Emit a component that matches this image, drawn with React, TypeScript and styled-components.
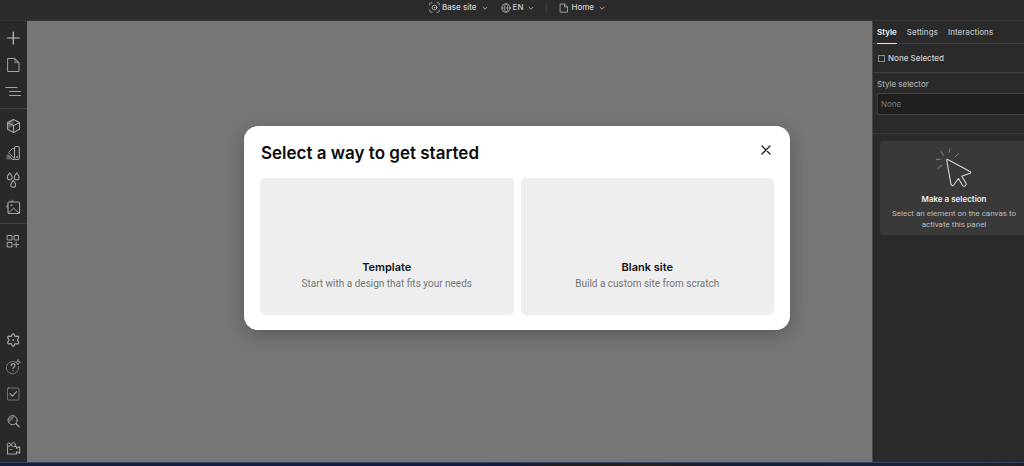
import React from "react";
import styled, { createGlobalStyle } from "styled-components";

const GlobalStyle = createGlobalStyle`
  *, *::before, *::after { box-sizing: border-box; }
  body {
    margin: 0;
    background: #2a2a2a;
    font-family: Inter, "Liberation Sans", sans-serif;
    -webkit-font-smoothing: antialiased;
  }
  button, input { font: inherit; color: inherit; }
  h1, h2, p { margin: 0; }
`;

const Viewport = styled.div`
  overflow: hidden;
`;

const Shell = styled.div`
  position: relative;
  display: grid;
  grid-template: 21px 1fr 4px / 27px 1fr 162px;
  grid-template-areas: "top top top" "rail canvas panel" "dock dock dock";
  width: calc(100% + 10px);
  min-height: 100vh;
`;

const TopBar = styled.header`
  grid-area: top;
  display: flex;
  align-items: flex-start;
  justify-content: center;
  background: #2b2b2b;
  border-bottom: 1px solid #363636;
`;

const TopMenu = styled.button`
  display: flex;
  align-items: center;
  height: 15px;
  padding: 0;
  border: 0;
  background: none;
  font-size: 8px;
  font-weight: 500;
  line-height: 15px;
  color: #cfcfcf;
  white-space: nowrap;

  svg { color: #a6a6a6; }
  svg:first-child { margin-right: 2px; }
  svg:last-child { margin-left: 5px; }
  & + & { margin-left: 13px; }
`;

const TopDivider = styled.span`
  width: 1px;
  height: 10px;
  margin: 3px 12px 0;
  background: #3c3c3c;
`;

const Rail = styled.nav`
  grid-area: rail;
  display: flex;
  flex-direction: column;
  padding: 3px 0 1px;
  background: #292929;
`;

const RailGroup = styled.div`
  display: flex;
  flex-direction: column;

  & + & {
    margin-top: 3px;
    padding-top: 3px;
    border-top: 1px solid #404040;
  }
`;

const RailFooter = styled.div`
  display: flex;
  flex-direction: column;
  margin-top: auto;
`;

const RailButton = styled.button`
  display: grid;
  place-items: center;
  height: 27px;
  padding: 0 1px 0 0;
  border: 0;
  background: none;
  color: #a4a4a4;
`;

const Canvas = styled.main`
  grid-area: canvas;
  background: #767676;
`;

const Panel = styled.aside`
  grid-area: panel;
  background: #2a2a2a;
  border-left: 1px solid #484848;
  font-size: 8px;
  color: #bdbdbd;
`;

const Tabs = styled.div`
  display: flex;
  gap: 10px;
  height: 23px;
  padding-left: 4px;
  border-bottom: 1px solid #424242;
`;

const Tab = styled.button<{ $active?: boolean }>`
  height: 23px;
  padding: 0;
  border: 0;
  border-bottom: 1px solid ${(p) => (p.$active ? "#e8e8e8" : "transparent")};
  background: none;
  font-weight: ${(p) => (p.$active ? 600 : 500)};
  color: ${(p) => (p.$active ? "#f0f0f0" : "#bdbdbd")};
`;

const SelectedRow = styled.div`
  display: flex;
  align-items: center;
  gap: 3px;
  height: 29px;
  padding-left: 5px;
  border-bottom: 1px solid #424242;
  font-weight: 500;
  color: #cfcfcf;
`;

const Square = styled.span`
  width: 7px;
  height: 7px;
  border: 1px solid #8c8c8c;
`;

const SelectorSection = styled.div`
  display: flex;
  flex-direction: column;
  gap: 2px;
  height: 61px;
  padding: 4px 4px 0;
  border-bottom: 1px solid #383838;

  label { line-height: 14px; }
`;

const SelectorInput = styled.input`
  width: 100%;
  height: 22px;
  padding: 0 3px;
  border: 1px solid #404040;
  border-radius: 2px;
  outline: 0;
  background: #1f1f1f;

  &::placeholder { color: #7d7d7d; opacity: 1; }
`;

const EmptyCard = styled.section`
  display: flex;
  flex-direction: column;
  align-items: center;
  margin: 7px 6px 0 7px;
  padding: 6px 8px 5px;
  border-radius: 3px;
  background: #393939;
  text-align: center;

  h2 {
    margin: 5px 0 3px;
    font-size: 8px;
    font-weight: 600;
    line-height: 11px;
    color: #ededed;
  }

  p {
    font-family: Roboto, "Liberation Sans", sans-serif;
    line-height: 11px;
  }
`;

const Dock = styled.footer`
  grid-area: dock;
  border-top: 1px solid #33435c;
  background: linear-gradient(90deg, #14203c 0%, #151b3d 50%, #201e22 54%, #251f20 63%, #14203a 72%, #16233a 88%, #211f24 100%);
`;

const Overlay = styled.div`
  position: absolute;
  inset: 0;
  display: grid;
  place-items: center;
  padding-bottom: 10px;
`;

const Dialog = styled.section`
  width: 90%;
  max-width: 546px;
  padding: 0 16px 15px;
  border-radius: 14px;
  background: #fff;
  box-shadow: 0 5px 18px rgba(0, 0, 0, 0.24);
`;

const DialogHeader = styled.div`
  display: flex;
  align-items: center;
  justify-content: space-between;
  height: 52px;
  padding: 1px 1px 0;

  h1 {
    font-size: 17px;
    font-weight: 600;
    line-height: 24px;
    color: #0b0b0b;
  }
`;

const CloseButton = styled.button`
  display: grid;
  place-items: center;
  width: 14px;
  height: 14px;
  margin-bottom: 6px;
  padding: 0;
  border: 0;
  background: none;
  color: #222;
`;

const Options = styled.div`
  display: grid;
  grid-template-columns: 1fr 1fr;
  gap: 7px;
`;

const OptionCard = styled.button`
  display: flex;
  flex-direction: column;
  align-items: center;
  justify-content: flex-end;
  height: 137px;
  padding: 0 8px 24px;
  border: 0;
  border-radius: 5px;
  background: #eee;
`;

const OptionTitle = styled.span`
  font-size: 11px;
  font-weight: 600;
  line-height: 17px;
  color: #111;
`;

const OptionText = styled.span`
  font-family: Roboto, "Liberation Sans", sans-serif;
  font-size: 10px;
  line-height: 15px;
  color: #757575;
`;

type IconProps = { size?: number; children: React.ReactNode };

function Icon({ size = 16, children }: IconProps) {
  return (
    <svg
      width={size}
      height={size}
      viewBox={`0 0 ${size} ${size}`}
      fill="none"
      stroke="currentColor"
      strokeWidth="1"
      strokeLinecap="round"
      strokeLinejoin="round"
      aria-hidden="true"
    >
      {children}
    </svg>
  );
}

const Chevron = () => (
  <Icon size={6}>
    <path d="M1 2.2 3 4.2 5 2.2" />
  </Icon>
);

const railGroups: { label: string; art: React.ReactNode }[][] = [
  [
    { label: "Add elements", art: <path d="M8.300 2v12M2.300 8h12" stroke="#c4c4c4" strokeWidth="1.2" /> },
    {
      label: "Pages",
      art: (
        <>
          <path d="M3 1.500h6.700L14 5.800v8.700H3z" />
          <path d="M9.700 1.500v4.300H14z" fill="currentColor" fillOpacity=".4" strokeOpacity=".5" />
        </>
      ),
    },
    { label: "Navigator", art: <path d="M.8 3.500H12M4.500 7.500h11M4.500 11.500h11" strokeWidth="1.1" /> },
  ],
  [
    {
      label: "Components",
      art: (
        <>
          <path d="M8.500 1.500 14.500 4.600v6.700L8.500 14.500 2.500 11.300V4.600zM2.500 4.600l6 3.200 6-3.200M8.500 7.800v6.700" strokeWidth="1.100" />
          <path d="M2.500 4.600 8.500 1.500v6.300zM2.500 4.600l6 3.200-6 3.500z" fill="currentColor" fillOpacity=".4" stroke="none" />
        </>
      ),
    },
    {
      label: "Variables",
      art: (
        <>
          <rect x="9.500" y="1.500" width="4.800" height="13" rx="1.500" strokeWidth="1.100" />
          <path d="M9.500 3.800 7.500 3.500 3.500 7.300 8.500 12.500M9.500 14.500H7.500L3.500 10" />
          <path d="M1.500 10v4.500h6L3 9.500z" fill="currentColor" fillOpacity=".5" stroke="none" />
          <circle cx="11.900" cy="12" r=".5" />
        </>
      ),
    },
    {
      label: "Styles",
      art: (
        <>
          <path d="M4.700.8C3.700 2.600 2.300 3.800 2.300 5.400a2.400 2.400 0 0 0 4.800 0C7.100 3.800 5.700 2.600 4.700.8z" strokeWidth="1.100" />
          <path d="M11.700.8c-1 1.800-2.400 3-2.400 4.600a2.400 2.400 0 0 0 4.800 0c0-1.600-1.400-2.800-2.400-4.600z" strokeWidth="1.100" />
          <path d="M8.200 8.300c-1 1.800-2.400 3-2.400 4.600a2.400 2.400 0 0 0 4.800 0c0-1.600-1.400-2.800-2.400-4.600z" strokeWidth="1.100" />
        </>
      ),
    },
    {
      label: "Assets",
      art: (
        <>
          <rect x="3" y="3" width="11.500" height="11.500" rx="1" strokeWidth="1.100" />
          <path d="m3.500 14 5-4.800 5.500 4.800" />
          <circle cx="6.300" cy="6.200" r=".5" />
          <path d="M3 5 .3 7.500 3 10zM4.500 3 7 .3 9.500 3z" fill="currentColor" fillOpacity=".5" stroke="none" />
        </>
      ),
    },
  ],
  [
    {
      label: "Apps",
      art: (
        <path d="M2.500 2.500H7V7H2.500zM9.500 2.500H13.500V7H9.500zM2.500 9.500H7V14H2.500zM11.200 9.200v5M8.700 11.700h5" />
      ),
    },
  ],
];

const railFooter: { label: string; art: React.ReactNode }[] = [
  {
    label: "Settings",
    art: (
      <>
        <path
          d="M7.500 1.900H8.900L10 4.300 13.300 4.100 13.800 5.500 12.300 8 13.800 10.500 13.300 11.900 10 11.700 8.900 14.100H7.500L6.400 11.700 3.100 11.900 2.600 10.500 4.100 8 2.600 5.500 3.100 4.100 6.400 4.300z"
          strokeWidth="1.200"
        />
        <circle cx="8.200" cy="8" r=".9" fill="currentColor" stroke="none" />
      </>
    ),
  },
  {
    label: "Help",
    art: (
      <>
        <path d="M10 2.900A6.200 6.200 0 1 0 13.700 7.500" strokeOpacity=".6" />
        <path d="M6.200 6.600a1.900 1.900 0 1 1 2.700 1.700c-.6.300-.9.600-.9 1.300M8 11.600v.1" strokeWidth="1.200" />
        <path d="M13 .8 13.700 2.600 15.500 3.300 13.700 4 13 5.800 12.300 4 10.500 3.300 12.300 2.600z" strokeWidth=".8" />
      </>
    ),
  },
  {
    label: "Audit",
    art: (
      <>
        <rect x="2.500" y="2" width="11.500" height="12" rx=".8" strokeOpacity=".6" />
        <path d="m5 7.700 2.300 2.400 4.300-4.400" strokeWidth="1.200" />
      </>
    ),
  },
  {
    label: "Find",
    art: (
      <>
        <circle cx="7.600" cy="7.200" r="4.600" />
        <path d="m11.100 10.700 3 3" strokeWidth="1.300" />
        <path d="M4.300 9.500A4 4 0 0 1 9.800 4z" fill="currentColor" fillOpacity=".5" stroke="none" />
      </>
    ),
  },
  {
    label: "Tutorials",
    art: (
      <>
        <path d="M2.500 6.500V14H11.500V11.700l3.200 1.500V6.800l-3.200 1.500V6.500H10" strokeWidth="1.100" />
        <circle cx="3.800" cy="4.700" r="1.800" />
        <circle cx="8.500" cy="4.700" r="2" />
        <path d="M5 9.500h2" strokeOpacity=".6" />
      </>
    ),
  },
];

export default function App() {
  return (
    <Viewport>
      <GlobalStyle />
      <Shell>
        <TopBar>
          <TopMenu>
            <Icon size={11}>
              <path d="M.8 3V1.500L1.500.8H3M8 .8h1.500l.7.7V3M10.200 8v1.500l-.7.7H8M3 10.200H1.500L.8 9.500V8" />
              <circle cx="5.500" cy="5.500" r="2.400" />
              <circle cx="5.500" cy="5.500" r=".4" />
            </Icon>
            Base site
            <Chevron />
          </TopMenu>
          <TopMenu>
            <Icon size={10}>
              <circle cx="5" cy="5" r="4.200" />
              <path d="M.8 5h8.400M5 .8C2.600 3 2.600 7 5 9.200M5 .8C7.400 3 7.400 7 5 9.200" strokeWidth=".8" />
            </Icon>
            EN
            <Chevron />
          </TopMenu>
          <TopDivider />
          <TopMenu>
            <Icon size={10}>
              <path d="M1.500 1h4L8.500 4v5.200h-7zM5.500 1v3h3" strokeWidth=".9" />
            </Icon>
            Home
            <Chevron />
          </TopMenu>
        </TopBar>

        <Rail aria-label="Tools">
          {railGroups.map((group) => (
            <RailGroup key={group[0].label}>
              {group.map((item) => (
                <RailButton key={item.label} aria-label={item.label}>
                  <Icon>{item.art}</Icon>
                </RailButton>
              ))}
            </RailGroup>
          ))}
          <RailFooter>
            {railFooter.map((item) => (
              <RailButton key={item.label} aria-label={item.label}>
                <Icon>{item.art}</Icon>
              </RailButton>
            ))}
          </RailFooter>
        </Rail>

        <Canvas />

        <Panel>
          <Tabs role="tablist">
            <Tab role="tab" aria-selected $active>Style</Tab>
            <Tab role="tab">Settings</Tab>
            <Tab role="tab">Interactions</Tab>
          </Tabs>
          <SelectedRow>
            <Square />
            None Selected
          </SelectedRow>
          <SelectorSection>
            <label htmlFor="style-selector">Style selector</label>
            <SelectorInput id="style-selector" placeholder="None" />
          </SelectorSection>
          <EmptyCard>
            <Icon size={42}>
              <path
                d="M13.700 13.200Q13.500 12 14.700 12.600L37 24.400Q38.500 25.500 37 26.200L28.700 29.300 33 36.300C34 38.500 31 40.300 29.600 38.500L25.400 31.500 21 37.800Q19 39.600 18 37.500z"
                strokeWidth="1.100"
                stroke="#d8d8d8"
              />
              <path d="M8.300 4.700 10.300 8.300M17 1.700 16.300 5.300M25.700 6.700 22 9.700M3.300 12.300H7.300M8.700 18.300 5 21.300" stroke="#858585" />
            </Icon>
            <h2>Make a selection</h2>
            <p>Select an element on the canvas to activate this panel</p>
          </EmptyCard>
        </Panel>

        <Dock />

        <Overlay>
          <Dialog role="dialog" aria-labelledby="dialog-title">
            <DialogHeader>
              <h1 id="dialog-title">Select a way to get started</h1>
              <CloseButton aria-label="Close">
                <Icon size={12}>
                  <path d="m2 2 8 8M10 2l-8 8" strokeWidth="1.300" />
                </Icon>
              </CloseButton>
            </DialogHeader>
            <Options>
              <OptionCard>
                <OptionTitle>Template</OptionTitle>
                <OptionText>Start with a design that fits your needs</OptionText>
              </OptionCard>
              <OptionCard>
                <OptionTitle>Blank site</OptionTitle>
                <OptionText>Build a custom site from scratch</OptionText>
              </OptionCard>
            </Options>
          </Dialog>
        </Overlay>
      </Shell>
    </Viewport>
  );
}
